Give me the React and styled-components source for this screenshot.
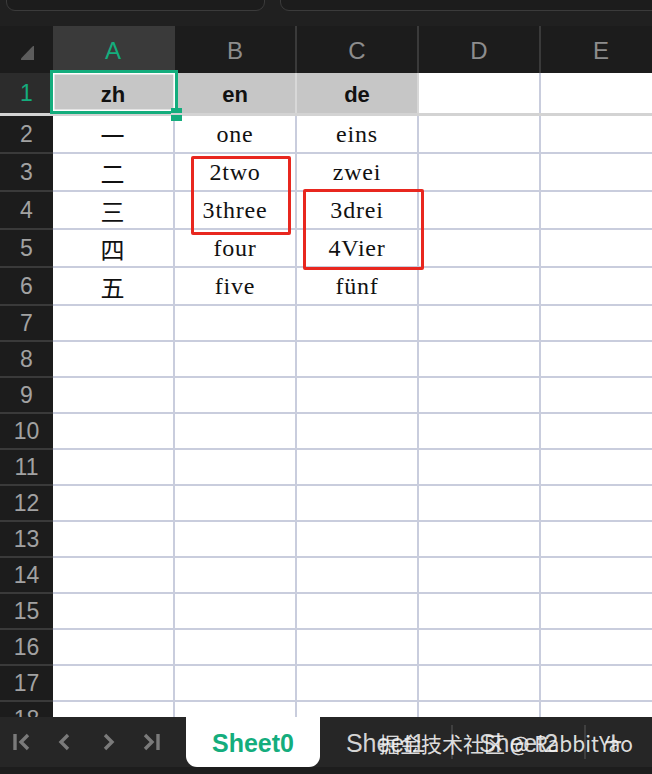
import styled, { createGlobalStyle } from 'styled-components';

const GlobalStyle = createGlobalStyle`
  html, body {
    margin: 0;
    padding: 0;
    background: #202020;
  }
  * {
    box-sizing: border-box;
  }
`;

const GREEN = '#14ad7d';
const GRID_LINE = '#c9cddd';
const DARK_LINE = '#3a3a3a';
const COLS = ['A', 'B', 'C', 'D', 'E'];

const rows = [
  ['zh', 'en', 'de', '', ''],
  ['一', 'one', 'eins', '', ''],
  ['二', '2two', 'zwei', '', ''],
  ['三', '3three', '3drei', '', ''],
  ['四', 'four', '4Vier', '', ''],
  ['五', 'five', 'fünf', '', ''],
];
const TOTAL_ROWS = 18;

const Screen = styled.div`
  width: 652px;
  height: 774px;
  overflow: hidden;
  display: flex;
  flex-direction: column;
  background: #202020;
  font-family: 'Liberation Sans', Arial, sans-serif;
`;

const TopBar = styled.div`
  height: 26px;
  flex: none;
  display: flex;
  gap: 15px;
  padding: 0 0 0 6px;
  overflow: hidden;
`;

const InputBox = styled.div`
  width: ${(p) => p.$width};
  flex: ${(p) => (p.$grow ? '1' : 'none')};
  height: 32px;
  margin-top: -21px;
  margin-right: ${(p) => (p.$grow ? '-20px' : '0')};
  border: 1.5px solid #3b3b3b;
  border-radius: 9px;
  background: #1c1c1c;
`;

const GridWrap = styled.div`
  position: relative;
  flex: 1;
  overflow: hidden;
`;

const Row = styled.div`
  display: grid;
  grid-template-columns: 53px repeat(5, 122px);
  height: ${(p) => p.$h}px;
  border-bottom: ${(p) => (p.$frozen ? '3px solid #d3d3d3' : 'none')};
`;

const Corner = styled.div`
  background: #1c1c1c;
  display: flex;
  align-items: center;
  justify-content: center;
  padding: 6px 0 0 0;
`;

const ColHead = styled.div`
  background: ${(p) => (p.$active ? '#3a3a3a' : '#1c1c1c')};
  border-right: 2px solid ${DARK_LINE};
  color: ${(p) => (p.$active ? GREEN : '#8d8d8d')};
  font-size: 24px;
  display: flex;
  align-items: center;
  justify-content: center;
  padding-top: 3px;
`;

const RowHead = styled.div`
  background: ${(p) => (p.$active ? '#2c2c2c' : '#1c1c1c')};
  border-bottom: ${(p) => (p.$frozen ? 'none' : `2px solid ${DARK_LINE}`)};
  color: ${(p) => (p.$active ? GREEN : '#a2a2a2')};
  font-size: 23px;
  display: flex;
  align-items: center;
  justify-content: center;
`;

const Cell = styled.div`
  background: ${(p) => (p.$shaded ? '#c6c6c6' : '#ffffff')};
  border-right: 2px solid ${(p) => (p.$shaded ? '#d8d8d8' : GRID_LINE)};
  border-bottom: ${(p) => (p.$frozen ? 'none' : `2px solid ${GRID_LINE}`)};
  color: #111;
  display: flex;
  align-items: center;
  justify-content: center;
  white-space: nowrap;
  font-family: ${(p) =>
    p.$head
      ? "'Liberation Sans', Arial, sans-serif"
      : "'Liberation Serif', 'Noto Sans CJK SC', serif"};
  font-size: ${(p) => (p.$head ? '22px' : '24px')};
  font-weight: ${(p) => (p.$head ? 700 : 400)};
  letter-spacing: ${(p) => (p.$head ? '0' : '0.8px')};
  padding-top: ${(p) => (p.$head ? '3px' : '0')};
`;

const Selection = styled.div`
  position: absolute;
  left: 50px;
  top: 44px;
  width: 128px;
  height: 44px;
  border: 3px solid ${GREEN};
  box-shadow: inset 0 0 0 1.5px #ffffff;
  pointer-events: none;
`;

const FillHandle = styled.div`
  position: absolute;
  left: 171px;
  top: 82px;
  width: 11px;
  height: 13px;
  background: ${GREEN};
  &::after {
    content: '';
    position: absolute;
    left: 0;
    right: 0;
    top: 5px;
    height: 2px;
    background: #d3d3d3;
  }
`;

const Mark = styled.div`
  position: absolute;
  left: ${(p) => p.$x}px;
  top: ${(p) => p.$y}px;
  width: ${(p) => p.$w}px;
  height: ${(p) => p.$h}px;
  border: 3px solid #e8271f;
  border-radius: 2px;
  pointer-events: none;
`;

const BottomBar = styled.div`
  position: relative;
  height: 57px;
  flex: none;
  display: flex;
  background: #262626;
  border-bottom: 7px solid #1d1d1d;
`;

const NavGroup = styled.div`
  display: flex;
  align-items: center;
  width: 172px;
`;

const NavButton = styled.div`
  width: 43px;
  height: 100%;
  display: flex;
  align-items: center;
  justify-content: center;
  color: #7a7a7a;
`;

const Tab = styled.div`
  width: ${(p) => (p.$active ? '134px' : '131px')};
  margin-left: ${(p) => (p.$active ? '14px' : '0')};
  display: flex;
  align-items: center;
  justify-content: center;
  font-size: 25px;
  font-weight: ${(p) => (p.$active ? 700 : 400)};
  color: ${(p) => (p.$active ? GREEN : '#d4d4d4')};
  background: ${(p) => (p.$active ? '#ffffff' : 'transparent')};
  border-radius: 0 0 11px 11px;
  padding-top: 2px;
`;

const TabDivider = styled.div`
  width: 2px;
  align-self: center;
  height: 34px;
  background: #3f3f3f;
`;

const AddTab = styled.div`
  flex: 1;
  display: flex;
  align-items: center;
  padding-left: 18px;
  color: #d4d4d4;
  font-size: 32px;
`;

const Watermark = styled.div`
  position: absolute;
  left: 379px;
  top: 11px;
  color: rgba(245, 245, 245, 0.9);
  font-family: 'Noto Sans CJK SC', 'Liberation Sans', sans-serif;
  font-size: 21px;
  white-space: nowrap;
  pointer-events: none;
`;

const Chevron = ({ dir = 'left', bar = false }) => (
  <svg width="22" height="22" viewBox="0 0 22 22" fill="none">
    {dir === 'left' ? (
      <>
        {bar && <path d="M4 3v16" stroke="currentColor" strokeWidth="3.4" />}
        <path
          d={bar ? 'M17 4l-7 7 7 7' : 'M14 4l-7 7 7 7'}
          stroke="currentColor"
          strokeWidth="3.4"
          strokeLinejoin="miter"
        />
      </>
    ) : (
      <>
        <path
          d={bar ? 'M5 4l7 7-7 7' : 'M8 4l7 7-7 7'}
          stroke="currentColor"
          strokeWidth="3.4"
          strokeLinejoin="miter"
        />
        {bar && <path d="M18 3v16" stroke="currentColor" strokeWidth="3.4" />}
      </>
    )}
  </svg>
);

const rowHeight = (n) => (n === 1 ? 40 : n <= 6 ? 38 : 36);

export default function App() {
  return (
    <>
      <GlobalStyle />
      <Screen>
        <TopBar>
          <InputBox $width="259px" />
          <InputBox $grow />
        </TopBar>

        <GridWrap>
          <Row $h={47}>
            <Corner>
              <svg width="16" height="16" viewBox="0 0 16 16">
                <path d="M15 1v14H2c0-1 0-1.5.7-2.3L13 2c.8-.8 1.2-1 2-1z" fill="#5c5c5c" />
              </svg>
            </Corner>
            {COLS.map((c) => (
              <ColHead key={c} $active={c === 'A'}>
                {c}
              </ColHead>
            ))}
          </Row>

          {Array.from({ length: TOTAL_ROWS }, (_, i) => {
            const n = i + 1;
            const data = rows[i] || ['', '', '', '', ''];
            const frozen = n === 1;
            return (
              <Row key={n} $h={rowHeight(n) + (frozen ? 3 : 0)} $frozen={frozen}>
                <RowHead $active={frozen} $frozen={frozen}>
                  {n}
                </RowHead>
                {data.map((v, j) => (
                  <Cell key={j} $frozen={frozen} $head={frozen} $shaded={frozen && j < 3}>
                    {v}
                  </Cell>
                ))}
              </Row>
            );
          })}

          <Selection />
          <FillHandle />
          <Mark $x={191} $y={130} $w={100} $h={79} />
          <Mark $x={303} $y={163} $w={121} $h={81} />
        </GridWrap>

        <BottomBar>
          <NavGroup>
            <NavButton>
              <Chevron dir="left" bar />
            </NavButton>
            <NavButton>
              <Chevron dir="left" />
            </NavButton>
            <NavButton>
              <Chevron dir="right" />
            </NavButton>
            <NavButton>
              <Chevron dir="right" bar />
            </NavButton>
          </NavGroup>
          <Tab $active>Sheet0</Tab>
          <Tab>Sheet1</Tab>
          <TabDivider />
          <Tab>Sheet2</Tab>
          <TabDivider />
          <AddTab>+</AddTab>
          <Watermark>掘金技术社区 @ RabbitYao</Watermark>
        </BottomBar>
      </Screen>
    </>
  );
}
